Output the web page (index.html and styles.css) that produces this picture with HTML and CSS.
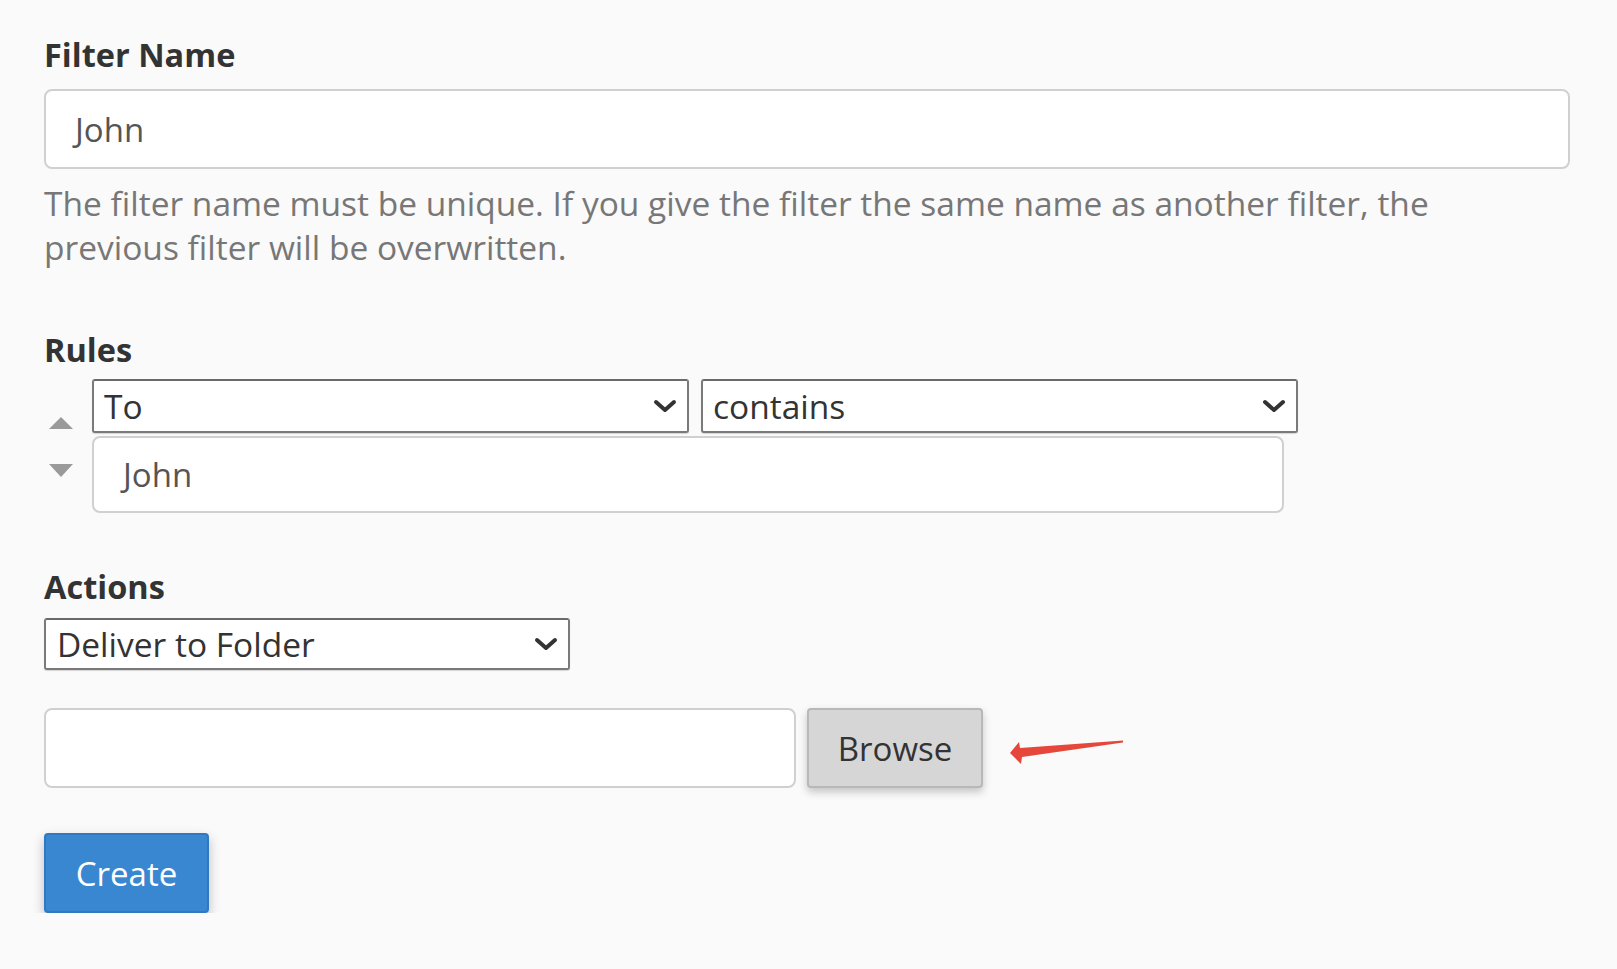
FILE: index.html
```html
<!DOCTYPE html>
<html lang="en">
<head>
<meta charset="utf-8">
<title>Create Filter</title>
<link rel="stylesheet" href="styles.css">
</head>
<body>
<form class="form">
  <div class="label">Filter Name</div>
  <div class="text-input name-input">John</div>
  <p class="help">The filter name must be unique. If you give the filter the same name as another filter, the previous filter will be overwritten.</p>

  <div class="label rules-label">Rules</div>
  <div class="rule">
    <div class="movers">
      <svg class="tri up" width="24" height="12" viewBox="0 0 24 12"><path d="M12 0 L24 12 L0 12 Z" fill="#9a9a9a"/></svg>
      <svg class="tri down" width="24" height="13" viewBox="0 0 24 13"><path d="M0 0 L24 0 L12 13 Z" fill="#9a9a9a"/></svg>
    </div>
    <div class="rule-fields">
      <div class="select-row">
        <div class="select rule-select"><span>To</span><svg class="chev" width="24" height="14" viewBox="0 0 24 14"><path d="M3 3 L12 11 L21 3" fill="none" stroke="#333" stroke-width="4" stroke-linecap="round" stroke-linejoin="round"/></svg></div>
        <div class="select rule-select"><span>contains</span><svg class="chev" width="24" height="14" viewBox="0 0 24 14"><path d="M3 3 L12 11 L21 3" fill="none" stroke="#333" stroke-width="4" stroke-linecap="round" stroke-linejoin="round"/></svg></div>
      </div>
      <div class="text-input rule-input">John</div>
    </div>
  </div>

  <div class="label actions-label">Actions</div>
  <div class="select action-select"><span>Deliver to Folder</span><svg class="chev" width="24" height="14" viewBox="0 0 24 14"><path d="M3 3 L12 11 L21 3" fill="none" stroke="#333" stroke-width="4" stroke-linecap="round" stroke-linejoin="round"/></svg></div>

  <div class="folder-row">
    <div class="text-input folder-input"></div>
    <div class="btn browse">Browse</div>
    <svg class="annot" width="122" height="30" viewBox="0 0 122 30"><path d="M5 16 L14 5 L15 11 L118 3.5 L118 5.5 L17 20 L16 27 Z" fill="#e5483a"/></svg>
  </div>

  <div class="btn create">Create</div>
</form>
</body>
</html>
```

FILE: styles.css
```css
html, body {
  margin: 0;
  padding: 0;
  background: #fafafa;
}
body {
  font-family: "Open Sans", "DejaVu Sans", sans-serif;
  color: #333;
}
.form {
  padding: 35px 48px 0 44px;
  display: flex;
  flex-direction: column;
  align-items: flex-start;
}
.label {
  font-size: 32.5px;
  font-weight: 700;
  line-height: 40px;
  color: #333;
}
.text-input {
  box-sizing: border-box;
  background: #fff;
  border: 2px solid #d0d0d0;
  border-radius: 8px;
  font-size: 33px;
  color: #555;
  display: flex;
  align-items: center;
}
.name-input {
  margin-top: 14px;
  width: 1526px;
  height: 80px;
  padding-left: 29px;
}
.help {
  margin: 12px 0 0 0;
  font-size: 33.5px;
  line-height: 44px;
  color: #777;
  max-width: 1480px;
}
.rules-label {
  margin-top: 61px;
}
.rule {
  margin-top: 9px;
  display: flex;
}
.movers {
  width: 48px;
  display: flex;
  flex-direction: column;
  padding-left: 5px;
  box-sizing: border-box;
}
.tri.up {
  margin-top: 38px;
}
.tri.down {
  margin-top: 35px;
}
.rule-fields {
  display: flex;
  flex-direction: column;
}
.select-row {
  display: flex;
  gap: 12px;
}
.select {
  box-sizing: border-box;
  background: #fff;
  border: 2px solid #7a7a7a;
  border-top-color: #6a6a6a;
  border-radius: 3px;
  box-shadow: 0 1px 1px rgba(0,0,0,0.15);
  display: flex;
  align-items: center;
  justify-content: space-between;
  font-size: 33.5px;
  color: #333;
  padding: 0 10px 0 10px;
}
.rule-select {
  width: 597px;
  height: 54px;
}
.rule-input {
  margin-top: 3px;
  width: 1192px;
  height: 77px;
  padding-left: 29px;
}
.actions-label {
  margin-top: 54px;
}
.action-select {
  margin-top: 11px;
  width: 526px;
  height: 52px;
  padding-left: 11px;
}
.folder-row {
  margin-top: 38px;
  display: flex;
  align-items: center;
}
.folder-input {
  width: 752px;
  height: 80px;
}
.btn {
  box-sizing: border-box;
  display: flex;
  align-items: center;
  justify-content: center;
  font-size: 33px;
  border-radius: 4px;
}
.browse {
  margin-left: 11px;
  width: 176px;
  height: 80px;
  background: #d6d6d6;
  border: 2px solid #b8b8b8;
  color: #333;
  box-shadow: 0 4px 8px rgba(0,0,0,0.22);
}
.annot {
  margin-left: 22px;
  margin-top: 8px;
}
.create {
  margin-top: 45px;
  width: 165px;
  height: 80px;
  background: #3a87d1;
  border: 2px solid #3079c2;
  color: #fff;
  box-shadow: 0 5px 12px rgba(0,0,0,0.25);
}
```
